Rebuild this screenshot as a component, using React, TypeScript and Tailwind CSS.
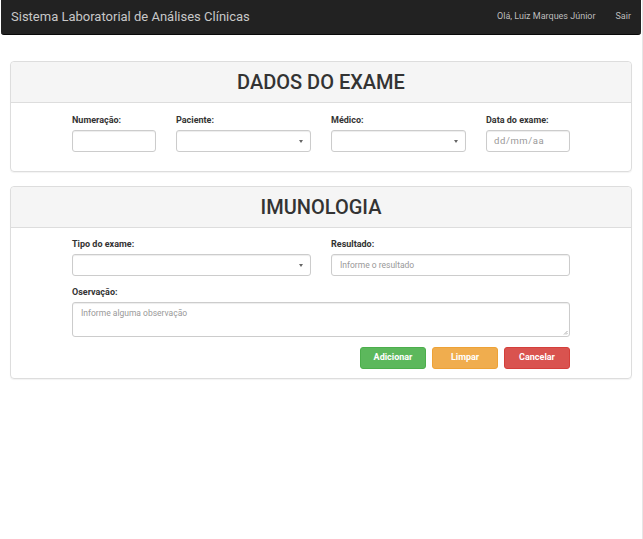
export default function App() {
  return (
    <div className="min-h-[539px] bg-white font-['Roboto','Liberation_Sans',sans-serif] text-[#333] border-r border-[#e6e6e6]">
      {/* Navbar */}
      <header className="mx-px h-[35px] bg-[#222] rounded-b-[3px] flex items-center justify-between pl-[10px] pr-[10px] border-b border-[#080808]">
        <span className="text-[13px] text-[#c8c8c8]">Sistema Laboratorial de Análises Clínicas</span>
        <nav className="flex items-center gap-[20px] text-[9px] text-[#bdbdbd]">
          <span>Olá, Luiz Marques Júnior</span>
          <span>Sair</span>
        </nav>
      </header>

      <main className="px-[10px] pt-[26px] flex flex-col gap-[14px]">
        {/* Dados do exame */}
        <section className="border border-[#ddd] rounded-[4px] shadow-[0_1px_1px_rgba(0,0,0,0.05)]">
          <div className="h-[41px] bg-[#f5f5f5] border-b border-[#ddd] rounded-t-[4px] flex items-center justify-center">
            <h2 className="text-[20px] font-medium text-[#333]">DADOS DO EXAME</h2>
          </div>
          <div className="pt-[12px] pb-[19px] flex justify-center">
            <div className="w-[498px] grid grid-cols-[84px_135px_135px_84px] gap-x-[20px]">
              <Field label="Numeração:">
                <Input />
              </Field>
              <Field label="Paciente:">
                <Select />
              </Field>
              <Field label="Médico:">
                <Select />
              </Field>
              <Field label="Data do exame:">
                <Input placeholder="dd/mm/aa" mono />
              </Field>
            </div>
          </div>
        </section>

        {/* Imunologia */}
        <section className="border border-[#ddd] rounded-[4px] shadow-[0_1px_1px_rgba(0,0,0,0.05)]">
          <div className="h-[41px] bg-[#f5f5f5] border-b border-[#ddd] rounded-t-[4px] flex items-center justify-center">
            <h2 className="text-[20px] font-medium text-[#333]">IMUNOLOGIA</h2>
          </div>
          <div className="pt-[11px] pb-[9px] flex justify-center">
            <div className="w-[498px] flex flex-col">
              <div className="grid grid-cols-2 gap-x-[20px]">
                <Field label="Tipo do exame:">
                  <Select />
                </Field>
                <Field label="Resultado:">
                  <Input placeholder="Informe o resultado" />
                </Field>
              </div>
              <div className="mt-[11px]">
                <Field label="Oservação:">
                  <div className="relative h-[35px] border border-[#ccc] rounded-[3px] shadow-[inset_0_1px_1px_rgba(0,0,0,0.075)] px-[8px] pt-[4px] text-[8.5px] text-[#999]">
                    Informe alguma observação
                    <svg className="absolute right-[1px] bottom-[1px]" width="5" height="5" viewBox="0 0 5 5">
                      <path d="M4.5 1 L1 4.5 M4.5 3 L3 4.5" stroke="#999" strokeWidth="0.8" />
                    </svg>
                  </div>
                </Field>
              </div>
              <div className="mt-[10px] flex justify-end gap-[6px]">
                <Button className="bg-[#5cb85c] border-[#4cae4c]">Adicionar</Button>
                <Button className="bg-[#f0ad4e] border-[#eea236]">Limpar</Button>
                <Button className="bg-[#d9534f] border-[#d43f3a]">Cancelar</Button>
              </div>
            </div>
          </div>
        </section>
      </main>
    </div>
  );
}

function Field({ label, children }: { label: string; children: React.ReactNode }) {
  return (
    <div className="flex flex-col">
      <label className="text-[9px] font-bold text-[#333] leading-[10px] mb-[5px]">{label}</label>
      {children}
    </div>
  );
}

function Input({ placeholder, mono }: { placeholder?: string; mono?: boolean }) {
  return (
    <div
      className={
        "h-[22px] border border-[#ccc] rounded-[3px] shadow-[inset_0_1px_1px_rgba(0,0,0,0.075)] flex items-center whitespace-nowrap text-[#999] " +
        (mono ? "pl-[7px] text-[9.5px] tracking-[0.6px]" : "px-[8px] text-[8.5px]")
      }
    >
      {placeholder}
    </div>
  );
}

function Select() {
  return (
    <div className="h-[22px] border border-[#ccc] rounded-[3px] shadow-[inset_0_1px_1px_rgba(0,0,0,0.075)] flex items-center justify-end pr-[7px]">
      <svg width="4" height="3" viewBox="0 0 4 3">
        <path d="M0 0 H4 L2 3 Z" fill="#666" />
      </svg>
    </div>
  );
}

function Button({ className, children }: { className: string; children: React.ReactNode }) {
  return (
    <button
      className={
        "w-[66px] h-[22px] rounded-[3px] border text-white text-[9px] font-bold flex items-center justify-center " +
        className
      }
    >
      {children}
    </button>
  );
}
